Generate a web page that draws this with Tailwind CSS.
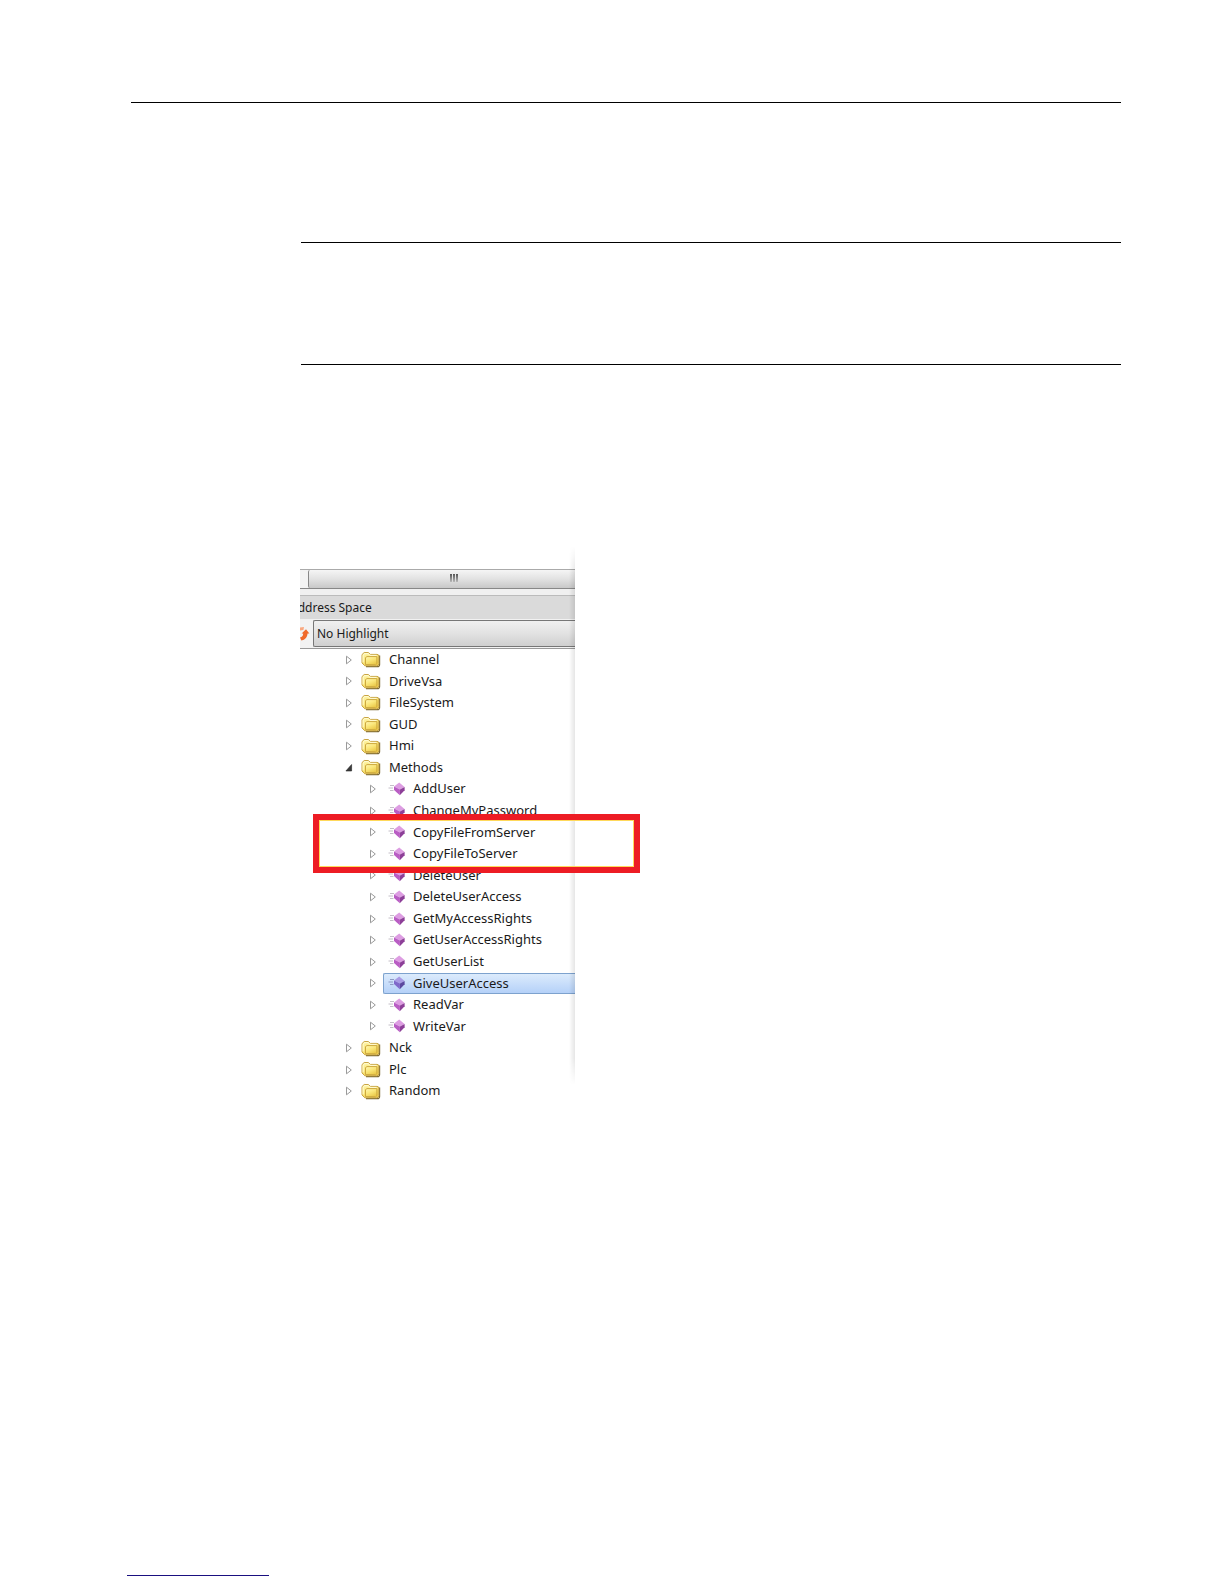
<!DOCTYPE html>
<html lang="en">
<head>
    <meta charset="UTF-8">
    <meta name="viewport" content="width=device-width, initial-scale=1.0">
    <title>Address Space</title>
    <script src="https://cdn.jsdelivr.net/npm/@tailwindcss/browser@4"></script>
</head>
<body class="bg-white flex flex-col min-h-screen text-[#1a1a1a] font-['Noto_Sans',sans-serif]">
    <!-- Shared icons -->
    <svg class="absolute size-0" aria-hidden="true">
        <defs>
            <linearGradient id="gold" x1="0" y1="0" x2="0.6" y2="1">
                <stop offset="0" stop-color="#fff8b4"/>
                <stop offset="0.5" stop-color="#fbe87c"/>
                <stop offset="1" stop-color="#eccb4c"/>
            </linearGradient>
        </defs>
        <symbol id="closed" viewBox="0 0 8 10">
            <path d="M1.5 1.2 L6.3 5 L1.5 8.8 Z" fill="#fff" stroke="#9a9a9a" stroke-width="1"/>
        </symbol>
        <symbol id="open" viewBox="0 0 8 10">
            <path d="M6.6 1.5 V8 H0.9 Z" fill="#3a3a3a" stroke="#2a2a2a" stroke-width="0.6"/>
        </symbol>
        <symbol id="folder" viewBox="0 0 20 17">
            <path d="M18.6 4.5 V13.4 Q18.6 15.6 16.4 15.6 H5" fill="none" stroke="#7d6a35" stroke-width="1.2"/>
            <path d="M1 12 V3.6 L3.2 1.5 H7.4 L9.4 3.4 H16 Q17.8 3.4 17.8 5 V12.6 Q17.8 14.8 15.8 14.8 H3.8 Z" fill="url(#gold)" stroke="#c9a544"/>
            <path d="M2.1 11.4 V4.2 L3.8 2.6 H7 L9 4.4 H15.6" fill="none" stroke="#fffbd6"/>
            <path d="M4.5 13.6 V6.6 L6 5.6 H15.9 V12.6 L14.6 13.8 Z" fill="url(#gold)" stroke="#cda83f"/>
        </symbol>
        <symbol id="method" viewBox="0 0 17 14">
            <path d="M2 3.5 H6 M0.5 6 H5 M2 8.5 H5.5" stroke="#c4bfc8" fill="none"/>
            <path d="M11.2 0.6 L16.6 5 L12 7.6 L6 4.6 Z" fill="#dd9de2"/>
            <path d="M16.6 5 V8.2 L11.8 13.2 L12 7.6 Z" fill="#8d3f98"/>
            <path d="M6 4.6 L12 7.6 L11.8 13.2 L6 8 Z" fill="#b95dc4"/>
        </symbol>
        <symbol id="method-selected" viewBox="0 0 17 14">
            <path d="M2 3.5 H6 M0.5 6 H5 M2 8.5 H5.5" stroke="#8f9bc4" fill="none"/>
            <path d="M11.2 0.6 L16.6 5 L12 7.6 L6 4.6 Z" fill="#a99be4"/>
            <path d="M16.6 5 V8.2 L11.8 13.2 L12 7.6 Z" fill="#5c489f"/>
            <path d="M6 4.6 L12 7.6 L11.8 13.2 L6 8 Z" fill="#8069ca"/>
        </symbol>
    </svg>

    <header class="mt-[102px] ml-[131px] mr-[103px] border-t border-black"></header>

    <main class="ml-[300px] mr-[103px] grow">
        <section class="mt-[139px] ml-px h-[123px] border-y border-black"></section>

        <section class="relative mt-[181px] w-[275px]">
            <div class="h-[23px]"></div>

            <!-- Horizontal scrollbar -->
            <div class="flex h-5 border-y border-t-[#aaa] border-b-[#888] bg-[#f4f4f4] pl-2">
                <div class="flex grow justify-center gap-px rounded-l-xs border-l border-[#888] bg-linear-to-b from-[#f5f5f5] via-[#e2e2e2] to-[#c8c8c8] pt-1 pl-6">
                    <span class="h-2 w-0.5 bg-linear-to-b from-[#555] to-[#bbb]"></span>
                    <span class="h-2 w-0.5 bg-linear-to-b from-[#555] to-[#bbb]"></span>
                    <span class="h-2 w-0.5 bg-linear-to-b from-[#555] to-[#bbb]"></span>
                </div>
            </div>
            <div class="h-1.5 bg-[#f0f0f0]"></div>

            <h1 class="flex h-6 items-center overflow-hidden border-t border-[#bbb] bg-[#dadada] text-[12px]">
                <span class="-ml-2.5">Address Space</span>
            </h1>

            <div class="flex h-[30px] items-center gap-[3px] border-b border-[#999] bg-[#f2f2f2]">
                <svg class="h-4 w-[10px]" viewBox="0 0 10 16">
                    <path d="M0 1.6 L4 1 L3.4 4 L0 4.4 Z" fill="#f9a880"/>
                    <path d="M0 11.4 Q3 11.4 3.2 7.6 H1.6 L6 3.2 L9.4 7.6 H7.6 Q7 14 1.4 14.4 Z" fill="#f0692a"/>
                </svg>
                <select aria-label="Highlight" class="h-[27px] grow appearance-none rounded-l-xs border border-r-0 border-[#777] bg-linear-to-b from-[#f0f0f0] via-[#e2e2e2] to-[#cfcfcf] pl-[3px] text-[12px]">
                    <option>No Highlight</option>
                </select>
            </div>

            <ul id="tree" class="grid h-[453px] auto-rows-fr text-[13px]"></ul>

            <!-- Edge shadow of the panel -->
            <div class="absolute top-0 right-0 h-[539px] w-1.5 bg-linear-to-r from-transparent to-black/10 mask-y-from-95%"></div>
            <!-- Marked methods -->
            <div class="absolute top-[268px] left-[13px] h-[59px] w-[327px] border-6 border-[#ed1c24] inset-ring inset-ring-[#ffd95a]"></div>
        </section>
    </main>

    <footer class="flex pb-2 pl-[127px]">
        <a href="#" aria-label="Home" class="block h-5 w-[142px] border-b border-[#1a1080]"></a>
    </footer>

    <script>
        const methods = ['AddUser', 'ChangeMyPassword', 'CopyFileFromServer', 'CopyFileToServer', 'DeleteUser', 'DeleteUserAccess',
            'GetMyAccessRights', 'GetUserAccessRights', 'GetUserList', 'GiveUserAccess', 'ReadVar', 'WriteVar'];
        const folders = ['Channel', 'DriveVsa', 'FileSystem', 'GUD', 'Hmi', 'Methods', 'Nck', 'Plc', 'Random'];
        const tree = document.getElementById('tree');

        function folderRow(name) {
            const arrow = name === 'Methods' ? 'open' : 'closed';
            return `<li class="flex items-center pl-[45px]">
                <button class="flex items-center">
                    <svg class="h-2.5 w-2"><use href="#${arrow}"/></svg>
                    <svg class="ml-2 mr-2 h-[17px] w-5"><use href="#folder"/></svg>
                    <span>${name}</span>
                </button>
            </li>`;
        }

        function methodRow(name) {
            const selected = name === 'GiveUserAccess';
            const box = selected ? 'border-[#7da2ce] bg-linear-to-b from-[#dcebfc] to-[#b5d1f8]' : 'border-transparent';
            return `<li class="flex items-stretch pl-[69px]">
                <svg class="h-2.5 w-2 self-center"><use href="#closed"/></svg>
                <button class="ml-1.5 flex grow items-center rounded-l-xs border border-r-0 ${box}">
                    <svg class="ml-1 mr-2 h-3.5 w-[17px]"><use href="#${selected ? 'method-selected' : 'method'}"/></svg>
                    <span>${name}</span>
                </button>
            </li>`;
        }

        tree.innerHTML = folders.map(name =>
            folderRow(name) + (name === 'Methods' ? methods.map(methodRow).join('') : '')
        ).join('');
    </script>
</body>
</html>
